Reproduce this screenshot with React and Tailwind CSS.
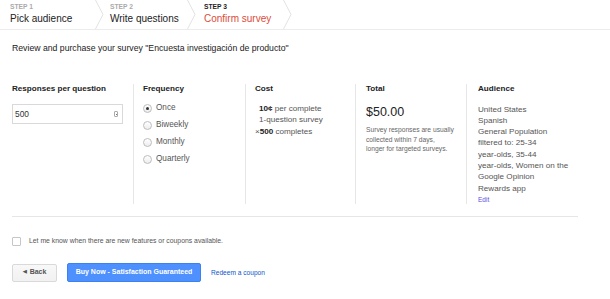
import React, { useState } from "react";

const font = { fontFamily: '"Liberation Sans", Arial, sans-serif' };

const Chevron = () => (
  <svg width="9" height="29" viewBox="0 0 9 29" className="shrink-0">
    <polyline points="0.5,0 8,14.5 0.5,29" fill="none" stroke="#e2e2e2" strokeWidth="1" />
  </svg>
);

const Step = ({ n, label, active, className }) => (
  <div className={`shrink-0 whitespace-nowrap pt-[3px] ${className}`}>
    <div className={`text-[6.7px] font-bold leading-[8px] ${active ? "text-[#222]" : "text-[#aaa]"}`}>
      STEP {n}
    </div>
    <div className={`mt-[1.5px] text-[10px] leading-[12px] ${active ? "text-[#dd4b39]" : "text-[#222]"}`}>
      {label}
    </div>
  </div>
);

const Radio = ({ label, checked, onClick }) => (
  <label className="flex items-center gap-[4px] h-[17px] cursor-pointer" onClick={onClick}>
    <span className="w-[9px] h-[9px] rounded-full border border-[#bdbdbd] bg-gradient-to-b from-white to-[#ededed] flex items-center justify-center">
      {checked && <span className="w-[3px] h-[3px] rounded-full bg-[#333]" />}
    </span>
    <span className="text-[8.2px] text-[#555]">{label}</span>
  </label>
);

const App = () => {
  const [freq, setFreq] = useState("Once");
  const [responses, setResponses] = useState("500");
  const [notify, setNotify] = useState(false);

  return (
    <div className="w-[610px] h-[299px] bg-white overflow-hidden" style={font}>
      <header className="flex h-[30px] border-b border-[#ececec]">
        <Step n={1} label="Pick audience" className="w-[95px] pl-[10px]" />
        <Chevron />
        <Step n={2} label="Write questions" className="w-[83px] pl-[6px]" />
        <Chevron />
        <Step n={3} label="Confirm survey" active className="w-[87px] pl-[8px]" />
        <Chevron />
      </header>

      <div className="px-3">
        <p className="mt-[13px] text-[8.7px] leading-[10px] text-[#222]">
          Review and purchase your survey "Encuesta investigación de producto"
        </p>

        <div className="flex mt-[31px] w-[566px]">
          <div className="w-[121px] shrink-0">
            <h3 className="text-[8.1px] font-bold text-[#222] leading-[10px]">Responses per question</h3>
            <div className="mt-[10px] w-[111px] h-[20px] border border-[#d9d9d9] flex items-center justify-between pl-[2px] pr-[4px]">
              <input
                value={responses}
                onChange={(e) => setResponses(e.target.value)}
                className="w-[80px] text-[8.4px] text-[#333] outline-none bg-transparent"
              />
              <span className="w-[4px] h-[6px] border border-[#aaa] rounded-[1px] flex flex-col items-center justify-center">
                <span className="w-[1px] h-[1px] bg-[#777]" />
              </span>
            </div>
          </div>

          <div className="w-[112px] shrink-0 border-l border-[#e6e6e6] pl-[9px]">
            <h3 className="text-[8.1px] font-bold text-[#222] leading-[10px]">Frequency</h3>
            <div className="mt-[6px] flex flex-col">
              {["Once", "Biweekly", "Monthly", "Quarterly"].map((f) => (
                <Radio key={f} label={f} checked={freq === f} onClick={() => setFreq(f)} />
              ))}
            </div>
          </div>

          <div className="w-[110px] shrink-0 border-l border-[#e6e6e6] pl-[9px] text-[8.1px] text-[#555] leading-[11.3px]">
            <h3 className="font-bold text-[#222] leading-[10px]">Cost</h3>
            <div className="mt-[9px] whitespace-nowrap">
              <p className="pl-[4px]"><b className="text-[#222]">10¢</b> per complete</p>
              <p className="pl-[4px]">1-question survey</p>
              <p>×<b className="text-[#222]">500</b> completes</p>
            </div>
          </div>

          <div className="w-[111px] shrink-0 border-l border-[#e6e6e6] pl-[10px]">
            <h3 className="text-[8.1px] font-bold text-[#222] leading-[10px]">Total</h3>
            <p className="mt-[11px] text-[12.5px] text-[#222] leading-[14px]">$50.00</p>
            <p className="mt-[6px] text-[6.7px] text-[#666] leading-[9.7px]">
              Survey responses are usually
              <br />
              collected within 7 days,
              <br />
              longer for targeted surveys.
            </p>
          </div>

          <div className="flex-1 border-l border-[#e6e6e6] pl-[11px]">
            <h3 className="text-[8.1px] font-bold text-[#222] leading-[10px]">Audience</h3>
            <div className="mt-[9.5px] text-[8.1px] text-[#555] leading-[11.3px] whitespace-nowrap">
              <p>United States</p>
              <p>Spanish</p>
              <p>General Population</p>
              <p>filtered to: 25-34</p>
              <p>year-olds, 35-44</p>
              <p>year-olds, Women on the</p>
              <p>Google Opinion</p>
              <p>Rewards app</p>
            </div>
            <a href="#" className="block mt-[2px] text-[6.5px] leading-[8px] text-[#5b4de0]">Edit</a>
          </div>
        </div>

        <div className="w-[566px] border-t border-[#e6e6e6] mt-[12px]" />

        <label className="flex items-center gap-[8px] mt-[19px] cursor-pointer" onClick={() => setNotify(!notify)}>
          <span className="w-[9px] h-[9px] border border-[#c6c6c6] rounded-[1px] bg-white flex items-center justify-center text-[7px] leading-none text-[#333]">
            {notify ? "✓" : ""}
          </span>
          <span className="text-[6.85px] text-[#555]">Let me know when there are new features or coupons available.</span>
        </label>

        <div className="flex items-center mt-[17px]">
          <button className="w-[45px] h-[18px] border border-[#d9d9d9] rounded-[2px] bg-gradient-to-b from-[#f8f8f8] to-[#f1f1f1] text-[7px] font-bold text-[#555] flex items-center justify-center gap-[3px]">
            <span className="text-[4.5px]">◀</span>Back
          </button>
          <button className="ml-[10px] w-[134px] h-[19px] rounded-[2px] bg-[#4d90fe] border border-[#3b82f0] text-[7px] font-bold text-white">
            Buy Now - Satisfaction Guaranteed
          </button>
          <a href="#" className="ml-[10px] text-[6.6px] text-[#1155cc]">Redeem a coupon</a>
        </div>
      </div>
    </div>
  );
};

export default App;
